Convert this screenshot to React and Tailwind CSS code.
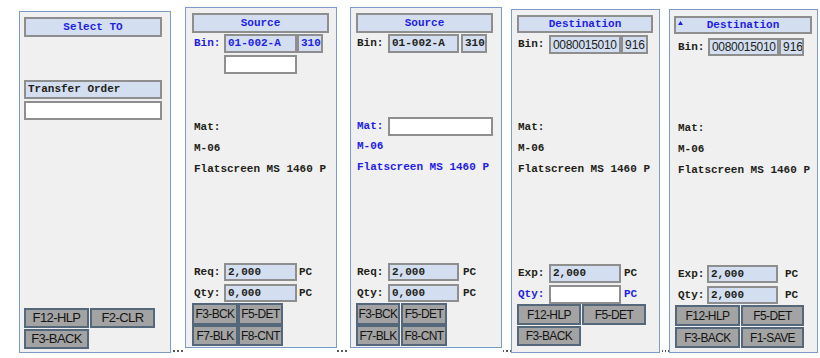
import React from "react";

const mono = "font-['Liberation_Mono','Courier_New',monospace] font-bold text-[11px] leading-none";
const sans = "font-['Liberation_Sans',Arial,sans-serif]";
const BLUE = "text-[#1e1ee6]";
const DARK = "text-[#221e18]";

function Header({ children, className = "", caret = false }) {
  return (
    <div
      className={`relative shrink-0 border-2 border-[#8e8e8e] bg-[#d3dff1] flex items-center justify-center ${BLUE} ${mono} ${className}`}
    >
      {caret && (
        <svg className="absolute left-[2px] top-[3px]" width="5" height="4" viewBox="0 0 5 4">
          <path d="M2.5 0 L5 4 L0 4 Z" fill="#1e1ee6" />
        </svg>
      )}
      {children}
    </div>
  );
}

function Field({ children, className = "", white = false, text = "" }) {
  return (
    <div
      className={`shrink-0 border-2 border-[#8e8e8e] flex items-center pl-[2px] overflow-hidden whitespace-nowrap ${white ? "bg-white" : "bg-[#d3dff1]"} ${text} ${className}`}
    >
      {children}
    </div>
  );
}

function Btn({ children, className = "" }) {
  return (
    <div
      className={`shrink-0 border-2 border-[#55677a] bg-[#a3a3a3] flex items-center justify-center whitespace-nowrap overflow-visible text-[#141414] text-[12px] tracking-[-0.6px] ${sans} ${className}`}
    >
      {children}
    </div>
  );
}

function Line({ children, className = "" }) {
  return (
    <div className={`h-[21px] shrink-0 flex items-center whitespace-nowrap ${mono} ${className}`}>{children}</div>
  );
}

function Dots({ className = "" }) {
  return (
    <div className={`flex flex-col justify-end pb-[6px] ${className}`}>
      <div className="flex gap-[2px]">
        <div className="w-[2px] h-[2px] bg-[#5a5a5a]" />
        <div className="w-[2px] h-[2px] bg-[#5a5a5a]" />
        <div className="w-[2px] h-[2px] bg-[#5a5a5a]" />
      </div>
    </div>
  );
}

const panelBase = "shrink-0 border border-[#7c9cc8] bg-[#f0f0f0] flex flex-col";
const binNum = `w-[72px] text-[12px] tracking-[-0.3px] ${sans}`;

export default function App() {
  return (
    <div className="w-[820px] h-[358px] bg-white flex items-stretch pl-[19px] overflow-hidden">
      {/* Panel 1 */}
      <div className={`${panelBase} mt-[11px] self-start w-[152px] h-[342px] pl-[4px] pt-[5px] pb-[3px]`}>
        <Header className="w-[138px] h-[20px]">Select TO</Header>
        <div
          className={`mt-[43px] w-[138px] h-[19px] border-2 border-[#8e8e8e] bg-[#d3dff1] flex items-center pl-[2px] ${DARK} ${mono}`}
        >
          Transfer Order
        </div>
        <Field white className="mt-[2px] w-[138px] h-[19px]" />
        <div className="mt-auto flex flex-col gap-[1px]">
          <div className="flex gap-[1px]">
            <Btn className="w-[65px] h-[20px] text-[13px]">F12-HLP</Btn>
            <Btn className="w-[65px] h-[20px] text-[13px]">F2-CLR</Btn>
          </div>
          <Btn className="w-[65px] h-[20px] text-[13px]">F3-BACK</Btn>
        </div>
      </div>

      <Dots className="w-[14px] pl-[2px]" />

      {/* Panel 2 */}
      <div className={`${panelBase} mt-[7px] self-start w-[152px] h-[341px] pl-[6px] pt-[5px] pb-[1px]`}>
        <Header className="w-[137px] h-[20px]">Source</Header>
        <div className="mt-[1px] h-[19px] flex items-stretch">
          <div className={`w-[32px] pl-[2px] flex items-center ${BLUE} ${mono}`}>Bin:</div>
          <Field className={`w-[73px] ${mono}`} text={BLUE}>01-002-A</Field>
          <Field className={`w-[26px] ${mono}`} text={BLUE}>310</Field>
        </div>
        <Field white className="mt-[2px] ml-[32px] w-[73px] h-[19px]" />
        <Line className={`mt-[43px] pl-[2px] ${DARK}`}>Mat:</Line>
        <Line className={`pl-[2px] ${DARK}`}>M-06</Line>
        <Line className={`pl-[2px] ${DARK}`}>Flatscreen MS 1460 P</Line>
        <div className="mt-auto flex flex-col">
          <div className="h-[18px] flex items-stretch">
            <div className={`w-[32px] pl-[2px] flex items-center ${DARK} ${mono}`}>Req:</div>
            <Field className={`w-[73px] ${mono}`} text={DARK}>2,000</Field>
            <div className={`ml-[2px] flex items-center ${DARK} ${mono}`}>PC</div>
          </div>
          <div className="mt-[3px] h-[18px] flex items-stretch">
            <div className={`w-[32px] pl-[2px] flex items-center ${DARK} ${mono}`}>Qty:</div>
            <Field className={`w-[73px] ${mono}`} text={DARK}>0,000</Field>
            <div className={`ml-[2px] flex items-center ${DARK} ${mono}`}>PC</div>
          </div>
          <div className="mt-[1px] flex">
            <Btn className="w-[46px] h-[22px]">F3-BCK</Btn>
            <Btn className="w-[45px] h-[22px]">F5-DET</Btn>
          </div>
          <div className="flex">
            <Btn className="w-[46px] h-[21px]">F7-BLK</Btn>
            <Btn className="w-[45px] h-[21px]">F8-CNT</Btn>
          </div>
        </div>
      </div>

      <Dots className="w-[13px]" />

      {/* Panel 3 */}
      <div className={`${panelBase} mt-[7px] self-start w-[152px] h-[341px] pl-[5px] pt-[5px] pb-[1px]`}>
        <Header className="w-[137px] h-[20px]">Source</Header>
        <div className="mt-[1px] h-[19px] flex items-stretch">
          <div className={`w-[32px] pl-[1px] flex items-center ${DARK} ${mono}`}>Bin:</div>
          <Field className={`w-[71px] ${mono}`} text={DARK}>01-002-A</Field>
          <Field className={`ml-[2px] w-[26px] ${mono}`} text={DARK}>310</Field>
        </div>
        <div className="mt-[64px] h-[19px] flex items-stretch">
          <div className={`w-[32px] pl-[1px] flex items-center ${BLUE} ${mono}`}>Mat:</div>
          <Field white className="w-[105px]" />
        </div>
        <Line className={`pl-[1px] ${BLUE}`}>M-06</Line>
        <Line className={`pl-[1px] ${BLUE}`}>Flatscreen MS 1460 P</Line>
        <div className="mt-auto flex flex-col">
          <div className="h-[18px] flex items-stretch">
            <div className={`w-[32px] pl-[1px] flex items-center ${DARK} ${mono}`}>Req:</div>
            <Field className={`w-[71px] ${mono}`} text={DARK}>2,000</Field>
            <div className={`ml-[4px] flex items-center ${DARK} ${mono}`}>PC</div>
          </div>
          <div className="mt-[3px] h-[18px] flex items-stretch">
            <div className={`w-[32px] pl-[1px] flex items-center ${DARK} ${mono}`}>Qty:</div>
            <Field className={`w-[71px] ${mono}`} text={DARK}>0,000</Field>
            <div className={`ml-[4px] flex items-center ${DARK} ${mono}`}>PC</div>
          </div>
          <div className="mt-[1px] flex gap-[1px]">
            <Btn className="w-[44px] h-[22px]">F3-BCK</Btn>
            <Btn className="w-[46px] h-[22px]">F5-DET</Btn>
          </div>
          <div className="flex gap-[1px]">
            <Btn className="w-[44px] h-[21px]">F7-BLK</Btn>
            <Btn className="w-[46px] h-[21px]">F8-CNT</Btn>
          </div>
        </div>
      </div>

      <Dots className="w-[9px] pl-[1px]" />

      {/* Panel 4 */}
      <div className={`${panelBase} mt-[9px] self-start w-[149px] h-[344px] pl-[5px] pt-[5px] pb-[6px]`}>
        <Header className="w-[136px] h-[18px]">Destination</Header>
        <div className="mt-[2px] h-[19px] flex items-stretch">
          <div className={`w-[32px] pl-[1px] flex items-center ${DARK} ${mono}`}>Bin:</div>
          <Field className={binNum} text={DARK}>0080015010</Field>
          <Field className={`w-[27px] text-[12px] ${sans}`} text={DARK}>916</Field>
        </div>
        <Line className={`mt-[63px] pl-[1px] ${DARK}`}>Mat:</Line>
        <Line className={`pl-[1px] ${DARK}`}>M-06</Line>
        <Line className={`pl-[1px] ${DARK}`}>Flatscreen MS 1460 P</Line>
        <div className="mt-auto flex flex-col">
          <div className="h-[19px] flex items-stretch">
            <div className={`w-[32px] pl-[1px] flex items-center ${DARK} ${mono}`}>Exp:</div>
            <Field className={`w-[72px] ${mono}`} text={DARK}>2,000</Field>
            <div className={`ml-[3px] flex items-center ${DARK} ${mono}`}>PC</div>
          </div>
          <div className="mt-[2px] h-[19px] flex items-stretch">
            <div className={`w-[32px] pl-[1px] flex items-center ${BLUE} ${mono}`}>Qty:</div>
            <Field white className="w-[72px]" />
            <div className={`ml-[3px] flex items-center ${BLUE} ${mono}`}>PC</div>
          </div>
          <div className="flex gap-[1px]">
            <Btn className="w-[64px] h-[21px]">F12-HLP</Btn>
            <Btn className="w-[64px] h-[21px]">F5-DET</Btn>
          </div>
          <div className="mt-[1px] flex">
            <Btn className="w-[64px] h-[20px]">F3-BACK</Btn>
          </div>
        </div>
      </div>

      <Dots className="w-[9px] pl-[2px]" />

      {/* Panel 5 */}
      <div className={`${panelBase} mt-[9px] self-start w-[149px] h-[344px] pl-[4px] pt-[6px] pb-[4px]`}>
        <Header caret className="w-[138px] h-[18px]">Destination</Header>
        <div className="mt-[4px] h-[18px] flex items-stretch">
          <div className={`w-[34px] pl-[4px] flex items-center ${DARK} ${mono}`}>Bin:</div>
          <Field className={`w-[71px] text-[12px] tracking-[-0.3px] ${sans}`} text={DARK}>0080015010</Field>
          <Field className={`w-[25px] text-[12px] ${sans}`} text={DARK}>916</Field>
        </div>
        <Line className={`mt-[62px] pl-[4px] ${DARK}`}>Mat:</Line>
        <Line className={`pl-[4px] ${DARK}`}>M-06</Line>
        <Line className={`pl-[4px] ${DARK}`}>Flatscreen MS 1460 P</Line>
        <div className="mt-auto flex flex-col">
          <div className="h-[18px] flex items-stretch">
            <div className={`w-[33px] pl-[4px] flex items-center ${DARK} ${mono}`}>Exp:</div>
            <Field className={`w-[71px] ${mono}`} text={DARK}>2,000</Field>
            <div className={`ml-[7px] flex items-center ${DARK} ${mono}`}>PC</div>
          </div>
          <div className="mt-[3px] h-[18px] flex items-stretch">
            <div className={`w-[33px] pl-[4px] flex items-center ${DARK} ${mono}`}>Qty:</div>
            <Field className={`w-[71px] ${mono}`} text={DARK}>2,000</Field>
            <div className={`ml-[7px] flex items-center ${DARK} ${mono}`}>PC</div>
          </div>
          <div className="mt-[1px] ml-[1px] flex gap-[1px]">
            <Btn className="w-[65px] h-[21px]">F12-HLP</Btn>
            <Btn className="w-[63px] h-[21px]">F5-DET</Btn>
          </div>
          <div className="mt-[1px] ml-[1px] flex gap-[1px]">
            <Btn className="w-[65px] h-[21px]">F3-BACK</Btn>
            <Btn className="w-[63px] h-[21px]">F1-SAVE</Btn>
          </div>
        </div>
      </div>
    </div>
  );
}
